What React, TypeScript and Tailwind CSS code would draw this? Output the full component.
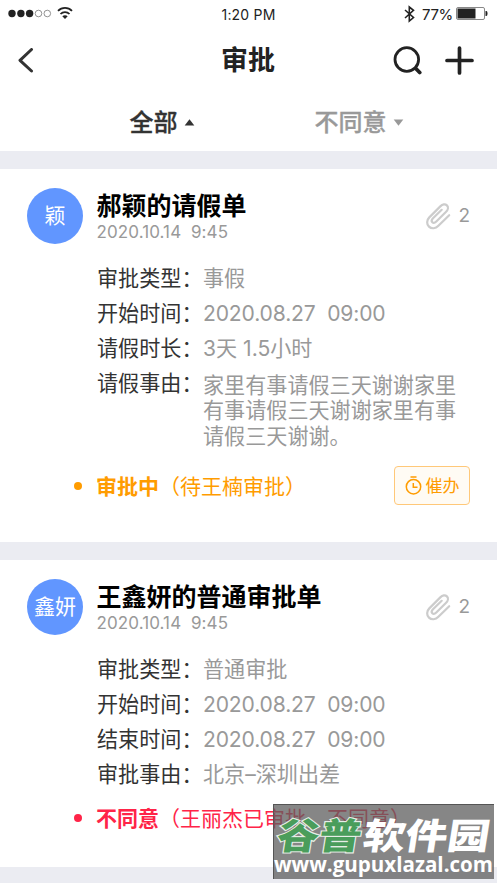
import React from 'react';

const SANS = "font-['Inter','Noto_Sans_CJK_SC',sans-serif]";

type Row = { label: string; value: string; latin?: boolean; long?: boolean };

type Approval = {
  avatar: string;
  title: string;
  rows: Row[];
};

const approvals: Approval[] = [
  {
    avatar: '颖',
    title: '郝颖的请假单',
    rows: [
      { label: '审批类型：', value: '事假' },
      { label: '开始时间：', value: '2020.08.27  09:00', latin: true },
      { label: '请假时长：', value: '3天 1.5小时' },
      { label: '请假事由：', value: '家里有事请假三天谢谢家里有事请假三天谢谢家里有事请假三天谢谢。', long: true },
    ],
  },
  {
    avatar: '鑫妍',
    title: '王鑫妍的普通审批单',
    rows: [
      { label: '审批类型：', value: '普通审批' },
      { label: '开始时间：', value: '2020.08.27  09:00', latin: true },
      { label: '结束时间：', value: '2020.08.27  09:00', latin: true },
      { label: '审批事由：', value: '北京–深圳出差' },
    ],
  },
];

function StatusBar() {
  return (
    <div className="flex h-[30px] items-start justify-between pl-2 pr-[9px] text-[#222]">
      <div className="flex w-[180px] items-center gap-[5px] pt-[6px]">
        <svg width="44" height="14" viewBox="0 0 44 14">
          <circle cx="4" cy="7.5" r="3.7" fill="#222" />
          <circle cx="12.9" cy="7.5" r="3.7" fill="#222" />
          <circle cx="21.6" cy="7.5" r="3.7" fill="#222" />
          <circle cx="30.5" cy="7.5" r="3.3" fill="none" stroke="#777" strokeWidth=".8" />
          <circle cx="39.3" cy="7.5" r="3.3" fill="none" stroke="#777" strokeWidth=".8" />
        </svg>
        <svg width="16" height="14" viewBox="0 0 16 14" fill="none" stroke="#222" strokeWidth="1.8">
          <path d="M1 4.9C5 .9 11 .9 15 4.9" />
          <path d="M3.5 8C6 5.4 10 5.4 12.5 8" />
          <path d="M5.3 10.3C6.8 8.8 9.2 8.8 10.7 10.3L8 13Z" fill="#222" stroke="none" />
        </svg>
      </div>
      <div className="pl-px pt-[6px] font-['Inter',sans-serif] text-[14px] leading-[18px] tracking-[0.2px]">1:20 PM</div>
      <div className="flex w-[180px] items-start justify-end">
        <svg className="mr-[7px] mt-[5px]" width="11" height="18" viewBox="0 0 11 18" fill="none" stroke="#222" strokeWidth="1.6">
          <path d="M1 5L9.5 12.5L5.3 16V2L9.5 5.3L1 13" />
        </svg>
        <span className="mr-[3px] pt-[6px] font-['Inter',sans-serif] text-[15px] leading-[18px] tracking-[-0.35px]">77%</span>
        <svg className="mt-[7px]" width="32" height="14" viewBox="0 0 32 14">
          <rect x=".5" y=".5" width="28" height="12" rx="1.5" fill="none" stroke="#888" />
          <rect x="1.5" y="1.5" width="18" height="10" fill="#222" />
          <path d="M29.5 4H30.5Q31.5 4.3 31.5 6.5T30.5 9H29.5Z" fill="#222" />
        </svg>
      </div>
    </div>
  );
}

function NavBar() {
  return (
    <div className="flex h-[61px] items-center justify-between pl-[17px] pr-[23px]">
      <div className="w-[110px]">
        <svg width="18" height="26" viewBox="0 0 18 26" fill="none" stroke="#333" strokeWidth="3" strokeLinecap="round" strokeLinejoin="round">
          <path d="M14.5 1.5L3 12.3L14.5 23" />
        </svg>
      </div>
      <h1 className="ml-[5px] text-[27px] font-bold leading-[36px] text-[#222]">审批</h1>
      <div className="flex w-[110px] items-center justify-end gap-[23px]">
        <svg width="29" height="29" viewBox="0 0 29 29" fill="none" stroke="#222" strokeLinecap="round">
          <circle cx="13.8" cy="13.5" r="11.8" strokeWidth="2.8" />
          <path d="M22.8 22.5L26.7 26.5" strokeWidth="3.8" />
        </svg>
        <svg width="29" height="29" viewBox="0 0 29 29" fill="none" stroke="#222" strokeWidth="3.7" strokeLinecap="round">
          <path d="M14.5 2V27M2 14.5H27" />
        </svg>
      </div>
    </div>
  );
}

function Tabs() {
  return (
    <div className="flex h-[60px] items-start pl-[129.5px] pt-[16px] text-[24px] leading-[32px]">
      <button className="flex w-[185px] items-center gap-[6px] font-medium text-[#333] [-webkit-text-stroke:0.3px]">
        全部
        <svg className="-mt-[2px]" width="11" height="7" viewBox="0 0 11 7"><path d="M5.5 .3L10.3 6.5H.7Z" fill="#333" /></svg>
      </button>
      <button className="flex items-center gap-[6px] font-medium text-[#999] [-webkit-text-stroke:0.3px]">
        不同意
        <svg className="-mt-[2px]" width="11" height="7" viewBox="0 0 11 7"><path d="M5.5 6.7L10.3 .5H.7Z" fill="#999" /></svg>
      </button>
    </div>
  );
}

function Clip() {
  return (
    <svg width="26" height="28" viewBox="0 0 26 28" fill="none" stroke="#ccc" strokeWidth="2.2" strokeLinecap="round">
      <path d="M24.2 13.2L13.4 23.8C10.6 26.8 6.4 27 4 24.6C1.5 22.2 1.5 18.2 4.3 15.4L15.3 4.4C17.5 2.2 20.2 1.7 21.9 3.4C23.6 5.1 23.2 7.7 21.1 9.8L11.3 19.5C9.9 20.9 8.3 21.2 7.3 20.2C6.3 19.2 6.7 17.6 8 16.3L16.7 7.8" />
    </svg>
  );
}

function CardHead({ avatar, title }: { avatar: string; title: string }) {
  return (
    <div className="flex h-[57px] pl-[27px] pr-[27px]">
      <div className="mt-[0.5px] flex size-[56px] items-center justify-center rounded-full bg-[#6196ff] pt-px text-[21px] leading-[28px] text-white">{avatar}</div>
      <div className="ml-[13.5px] flex-1">
        <h2 className="mt-[2px] h-[33px] whitespace-nowrap text-[25px] font-bold leading-[34px] text-black">{title}</h2>
        <div className="whitespace-pre text-[17px] leading-[20px] tracking-[0.1px] text-[#999]">2020.10.14  9:45</div>
      </div>
      <div className="flex items-center gap-[7px] text-[19px] leading-[24px] text-[#999]">
        <Clip />
        2
      </div>
    </div>
  );
}

function Fields({ rows }: { rows: Row[] }) {
  return (
    <dl className="mt-[17px] pl-[97px] text-[21.1px]">
      {rows.map((row) => (
        <div key={row.label} className="flex">
          <dt className="h-[35px] w-[106px] shrink-0 whitespace-nowrap leading-[35px] text-[#333]">{row.label}</dt>
          <dd
            className={
              row.long
                ? 'w-[256px] pt-[7px] leading-[25.3px] text-[#999]'
                : row.latin
                  ? 'h-[35px] whitespace-pre leading-[35px] tracking-[-0.15px] text-[#999]'
                  : 'h-[35px] whitespace-pre leading-[36px] text-[#999]'
            }
          >
            {row.value}
          </dd>
        </div>
      ))}
    </dl>
  );
}

function Watermark() {
  return (
    <div className="absolute left-[273px] top-[804px] h-[75px] w-[221px] border-l border-t border-[#555] bg-[#5e5e5e]/75">
      <svg className="overflow-visible" width="220" height="74" viewBox="0 0 220 74">
        <g transform="translate(1.5 43.5) skewX(-9) scale(1.17 1)" fontFamily="Noto Sans CJK SC, sans-serif" fontWeight="900" fontSize="36">
          <text x="0" y="0" fill="#4a9d5b" stroke="#e6eee6" strokeWidth="2.2" paintOrder="stroke">谷普</text>
          <text x="73.5" y="0" fill="#fff">软件园</text>
        </g>
        <text x="0" y="67" textLength="219" lengthAdjust="spacingAndGlyphs" fill="#fff" fontFamily="Open Sans, sans-serif" fontWeight="700" fontSize="22">www.gupuxlazal.com</text>
      </svg>
    </div>
  );
}

export default function App() {
  return (
    <div className={`relative h-[883px] w-[497px] overflow-hidden bg-[#ebecf2] ${SANS}`}>
      <header className="bg-white">
        <StatusBar />
        <NavBar />
        <Tabs />
      </header>

      <section className="mt-[18px] h-[373px] bg-white pt-[18px]">
        <CardHead avatar={approvals[0].avatar} title={approvals[0].title} />
        <Fields rows={approvals[0].rows} />
        <div className="mt-[17.5px] flex h-[39px] items-center pl-[74px] pr-[27px] text-[21px] text-[#ff9c00]">
          <span className="size-[8px] rounded-full bg-[#ff9c00]" />
          <span className="ml-[14px] mt-[2px] font-bold">审批中</span>
          <span className="mt-[2px]">（待王楠审批）</span>
          <button className="ml-auto flex h-[39px] w-[76px] items-center justify-center gap-[4px] rounded-[4px] border border-[#ffc879] bg-[#fffbf4] text-[17px]">
            <svg width="17" height="19" viewBox="0 0 17 19" fill="none" stroke="#ff9c00" strokeWidth="1.5">
              <circle cx="8.5" cy="10.7" r="7.2" />
              <path d="M5.5 1H11.5M8.3 7V11.3H12.5" />
            </svg>
            <span className="mt-[2px]">催办</span>
          </button>
        </div>
      </section>

      <section className="mt-[18px] h-[307px] bg-white pt-[18px]">
        <CardHead avatar={approvals[1].avatar} title={approvals[1].title} />
        <Fields rows={approvals[1].rows} />
        <div className="mt-[10px] flex h-[32px] items-center whitespace-nowrap pl-[74px] text-[21px] text-[#ff2448]">
          <span className="size-[8px] rounded-full bg-[#ff2448]" />
          <span className="ml-[14px] mt-px font-bold">不同意</span>
          <span className="mt-px">（王丽杰已审批，不同意）</span>
        </div>
      </section>

      <Watermark />
    </div>
  );
}
